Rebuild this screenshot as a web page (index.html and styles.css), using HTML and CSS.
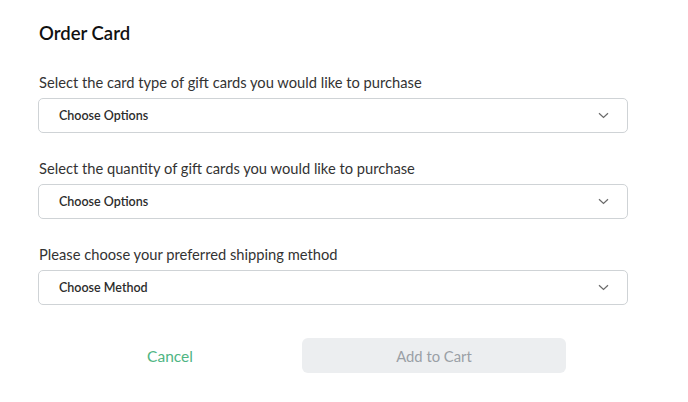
FILE: index.html
```html
<!DOCTYPE html>
<html>
<head>
<meta charset="utf-8">
<link rel="stylesheet" href="styles.css">
</head>
<body>
<div class="card">
  <h1 class="title">Order Card</h1>
  <div class="field">
    <label class="label">Select the card type of gift cards you would like to purchase</label>
    <div class="select"><span>Choose Options</span><svg class="chev" width="11" height="7" viewBox="0 0 11 7"><path d="M1 1.2l4.5 4.3 4.5-4.3" fill="none" stroke="#6a6a6a" stroke-width="1.2"/></svg></div>
  </div>
  <div class="field">
    <label class="label">Select the quantity of gift cards you would like to purchase</label>
    <div class="select"><span>Choose Options</span><svg class="chev" width="11" height="7" viewBox="0 0 11 7"><path d="M1 1.2l4.5 4.3 4.5-4.3" fill="none" stroke="#6a6a6a" stroke-width="1.2"/></svg></div>
  </div>
  <div class="field">
    <label class="label">Please choose your preferred shipping method</label>
    <div class="select"><span>Choose Method</span><svg class="chev" width="11" height="7" viewBox="0 0 11 7"><path d="M1 1.2l4.5 4.3 4.5-4.3" fill="none" stroke="#6a6a6a" stroke-width="1.2"/></svg></div>
  </div>
  <div class="actions">
    <button class="cancel">Cancel</button>
    <button class="add">Add to Cart</button>
  </div>
</div>
</body>
</html>
```
FILE: styles.css
```css
* { box-sizing: border-box; }
body {
  margin: 0;
  background: #fff;
  font-family: Lato, "Open Sans", sans-serif;
  color: #222;
}
.card {
  padding: 21px 60px 0 38px;
  width: 688px;
}
.title {
  margin: 0 0 0 1px;
  font-size: 18.5px;
  font-weight: 600;
  line-height: 24px;
  color: #111;
}
.field {
  margin-top: 27px;
}
.field + .field { margin-top: 25px; }
.label {
  display: block;
  margin-left: 1px;
  font-size: 14.7px;
  line-height: 20px;
  color: #333;
  margin-bottom: 6px;
}
.select {
  height: 35px;
  width: 590px;
  border: 1px solid #cfd3d6;
  border-radius: 5px;
  display: flex;
  align-items: center;
  justify-content: space-between;
  padding: 0 18px 0 20px;
  font-size: 12.5px;
  font-weight: 600;
  color: #2c2c2c;
}
.chev { display: block; }
.actions {
  margin-top: 33px;
  display: flex;
  align-items: center;
}
button {
  font-family: inherit;
  border: none;
  background: none;
  font-size: 14.8px;
}
.cancel {
  width: 264px;
  height: 35px;
  color: #4fb583;
  font-size: 15.5px;
}
.add {
  width: 264px;
  height: 35px;
  border-radius: 6px;
  background: #eceef0;
  color: #9aa0a6;
}
```
